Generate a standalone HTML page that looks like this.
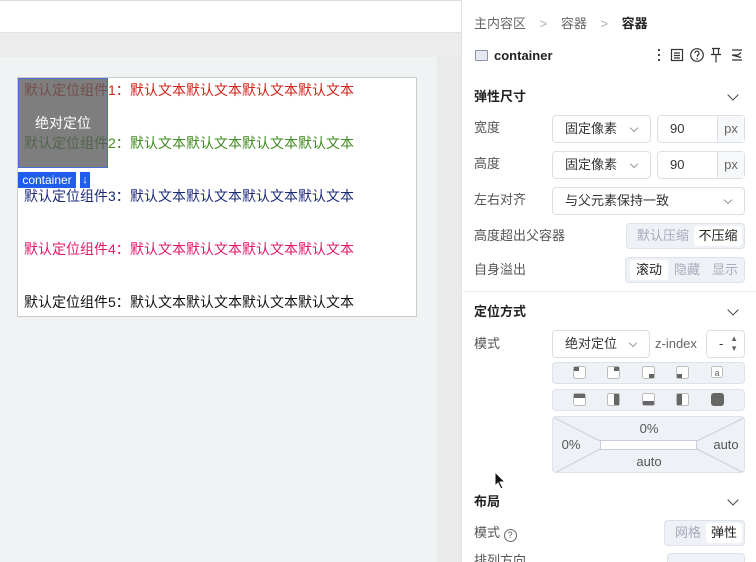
<!DOCTYPE html>
<html><head><meta charset="utf-8"><style>
*{box-sizing:border-box;margin:0;padding:0}
html,body{width:756px;height:562px;overflow:hidden}
body{position:relative;background:#fff;font-family:"Liberation Sans","Noto Sans CJK SC",sans-serif;font-size:13px;color:#333}
.abs{position:absolute}
.lbl{position:absolute;left:474px;font-size:13px;color:#555;line-height:16px}
.sel{position:absolute;border:1px solid #dcdfe6;border-radius:4px;background:#fff;font-size:13px;color:#333;padding-left:12px;line-height:26px;height:28px}
.sel .ch{position:absolute;right:13px;top:9px;width:6px;height:6px;border-right:1px solid #999;border-bottom:1px solid #999;transform:rotate(45deg)}
.seg{position:absolute;background:#eef1f6;border:1px solid #dde2ea;border-radius:4px;height:26px;font-size:13px}
.seg span{position:absolute;top:2px;height:20px;line-height:20px;text-align:center;color:#aab}
.seg span.on{background:#fff;color:#222;border-radius:3px}
.h{position:absolute;left:474px;font-size:13px;font-weight:bold;color:#222;line-height:16px}
.arr{position:absolute;left:729px;width:8px;height:8px;border-right:1.2px solid #444;border-bottom:1.2px solid #444;transform:rotate(45deg)}
.t{position:absolute;left:24px;font-size:14px;white-space:nowrap;line-height:16px}
.t b{font-weight:normal;position:absolute;left:106px}
</style></head><body>
<div class="abs" style="left:0;top:0;width:461px;height:32px;background:#fff;border-top:1px solid #ddd"></div>
<div class="abs" style="left:0;top:32px;width:461px;height:25px;background:#ececec;border-top:1px solid #e2e2e2"></div>
<div class="abs" style="left:0;top:57px;width:437px;height:505px;background:#f0f3f4"></div>
<div class="abs" style="left:437px;top:57px;width:24px;height:505px;background:#eaeaea"></div>
<div class="abs" style="left:17px;top:77px;width:400px;height:240px;background:#fff;border:1px solid #ccc"></div>
<div class="t" style="top:82px;color:#d0241b">默认定位组件1：<b>默认文本默认文本默认文本默认文本</b></div>
<div class="t" style="top:135px;color:#3f8a1f">默认定位组件2：<b>默认文本默认文本默认文本默认文本</b></div>
<div class="t" style="top:188px;color:#1c2a7a">默认定位组件3：<b>默认文本默认文本默认文本默认文本</b></div>
<div class="t" style="top:241px;color:#e0186a">默认定位组件4：<b>默认文本默认文本默认文本默认文本</b></div>
<div class="t" style="top:294px;color:#111">默认定位组件5：<b>默认文本默认文本默认文本默认文本</b></div>
<div class="abs" style="left:18px;top:78px;width:90px;height:90px;background:rgba(90,90,90,.78);border:1px solid #4a6fd0;color:#fff;font-size:14px;text-align:center;line-height:88px">绝对定位</div>
<div class="abs" style="left:18px;top:172px;width:58px;height:16px;background:#1f5eea;color:#fff;font-size:12px;line-height:16px;text-align:center">container</div>
<div class="abs" style="left:80px;top:172px;width:10px;height:16px;background:#1f5eea;color:#fff;font-size:11px;line-height:16px;text-align:center">↓</div>
<!-- panel -->
<div class="abs" style="left:461px;top:0;width:295px;height:562px;background:#fff;border-left:1px solid #e0e0e0"></div>
<div class="abs" style="left:474px;top:13px;font-size:13px;color:#666;white-space:nowrap">主内容区 <span style="color:#aaa;margin:0 10px">&gt;</span> 容器 <span style="color:#aaa;margin:0 10px">&gt;</span> <span style="color:#222;font-weight:bold">容器</span></div>
<div class="abs" style="left:475px;top:50px;width:13px;height:11px;border:1px solid #8a94a6;background:#e6eaf0;border-radius:1px"></div>
<div class="abs" style="left:494px;top:48px;font-size:13px;font-weight:bold;color:#222">container</div>
<svg class="abs" style="left:652px;top:46px" width="96" height="18">
<g fill="#333"><circle cx="7" cy="4" r="1.1"/><circle cx="7" cy="9" r="1.1"/><circle cx="7" cy="14" r="1.1"/></g>
<g stroke="#333" fill="none" stroke-width="1.2"><rect x="19.5" y="3.5" width="11" height="11"/><path d="M22 7h6M22 9.5h6M22 12h6"/>
<circle cx="45" cy="9" r="6.3"/><path d="M43 7.2a2 2 0 1 1 2.5 1.9v1.6"/>
<path d="M60 2.5h8M61.5 2.5v6M66.5 2.5v6M59 8.5h10M64 8.5v8"/>
<path d="M80 4h10M80 9h6l3-2.5M80 9l9 2.5M80 14h10"/></g>
<circle cx="45" cy="12.8" r=".8" fill="#333"/></svg>
<div class="h" style="top:89px">弹性尺寸</div><div class="arr" style="top:91px"></div>
<div class="lbl" style="top:120px">宽度</div>
<div class="sel" style="left:552px;top:115px;width:99px">固定像素<span class="ch"></span></div>
<div class="sel" style="left:657px;top:115px;width:88px">90<span style="position:absolute;right:0;top:0;width:27px;height:26px;border-left:1px solid #dcdfe6;background:#f7f8fa;color:#666;text-align:center">px</span></div>
<div class="lbl" style="top:156px">高度</div>
<div class="sel" style="left:552px;top:151px;width:99px">固定像素<span class="ch"></span></div>
<div class="sel" style="left:657px;top:151px;width:88px">90<span style="position:absolute;right:0;top:0;width:27px;height:26px;border-left:1px solid #dcdfe6;background:#f7f8fa;color:#666;text-align:center">px</span></div>
<div class="lbl" style="top:192px">左右对齐</div>
<div class="sel" style="left:552px;top:187px;width:193px">与父元素保持一致<span class="ch"></span></div>
<div class="lbl" style="top:228px">高度超出父容器</div>
<div class="seg" style="left:626px;top:223px;width:119px"><span style="left:4px;width:64px">默认压缩</span><span class="on" style="left:67px;width:48px">不压缩</span></div>
<div class="lbl" style="top:262px">自身溢出</div>
<div class="seg" style="left:625px;top:257px;width:120px"><span class="on" style="left:4px;width:38px">滚动</span><span style="left:42px;width:38px">隐藏</span><span style="left:80px;width:38px">显示</span></div>
<div class="abs" style="left:461px;top:291px;width:295px;height:1px;background:#eee"></div>
<div class="h" style="top:304px">定位方式</div><div class="arr" style="top:306px"></div>
<div class="lbl" style="top:336px">模式</div>
<div class="sel" style="left:552px;top:330px;width:98px">绝对定位<span class="ch"></span></div>
<div class="abs" style="left:655px;top:336px;color:#666;font-size:13px;line-height:16px">z-index</div>
<div class="sel" style="left:706px;top:330px;width:39px">-<span style="position:absolute;right:6px;top:0;color:#666;font-size:8px;line-height:10px;padding-top:3px">▲<br>▼</span></div>
<div class="seg" style="left:552px;top:362px;width:193px;height:22px"></div>
<div class="seg" style="left:552px;top:389px;width:193px;height:22px"></div>
<svg class="abs" style="left:552px;top:362px" width="193" height="50">
<g fill="#fff" stroke="#bbb"><rect x="21.5" y="4.5" width="12" height="12" rx="2"/><rect x="55.5" y="4.5" width="12" height="12" rx="2"/><rect x="90.5" y="4.5" width="12" height="12" rx="2"/><rect x="124.5" y="4.5" width="12" height="12" rx="2"/><rect x="159.5" y="4.5" width="11" height="11" rx="2"/>
<rect x="21.5" y="31.5" width="12" height="12" rx="2"/><rect x="55.5" y="31.5" width="12" height="12" rx="2"/><rect x="90.5" y="31.5" width="12" height="12" rx="2"/><rect x="124.5" y="31.5" width="12" height="12" rx="2"/></g>
<g fill="#666"><rect x="22" y="5" width="5" height="4"/><rect x="62" y="5" width="5" height="4"/><rect x="97" y="12" width="5" height="4"/><rect x="125" y="12" width="5" height="4"/><rect x="22" y="32" width="11" height="4"/><rect x="62" y="32" width="5" height="11"/><rect x="91" y="39" width="11" height="4"/><rect x="125" y="32" width="5" height="11"/><rect x="159" y="31" width="13" height="13" rx="3"/></g>
<text x="165" y="14" font-size="9" fill="#666" text-anchor="middle" font-family="Liberation Sans">a</text></svg>
<div class="seg" style="left:552px;top:416px;width:193px;height:57px;overflow:hidden">
<svg class="abs" style="left:0;top:0" width="193" height="57"><path d="M0 0L47 24M193 0L144 24M0 57L47 32M193 57L144 32" stroke="#ccd" fill="none"/><rect x="47.5" y="23.5" width="96" height="9" fill="#fff" stroke="#ccd"/></svg>
<span style="left:86px;top:2px;color:#555;width:20px">0%</span>
<span style="left:8px;top:18px;color:#555;width:20px">0%</span>
<span style="left:160px;top:18px;color:#555;width:26px">auto</span>
<span style="left:82px;top:35px;color:#555;width:28px">auto</span></div>
<svg class="abs" style="left:494px;top:471px" width="12" height="18"><path d="M1 1v14l3-3 3 6 2-1-3-6h5z" fill="#111" stroke="#fff"/></svg>
<div class="h" style="top:494px">布局</div><div class="arr" style="top:496px"></div>
<div class="lbl" style="top:525px">模式 <span style="display:inline-block;width:13px;height:13px;border:1px solid #666;border-radius:50%;font-size:9px;text-align:center;line-height:11px;vertical-align:-1px">?</span></div>
<div class="seg" style="left:664px;top:520px;width:81px"><span style="left:4px;width:38px">网格</span><span class="on" style="left:41px;width:36px">弹性</span></div>
<div class="lbl" style="top:553px">排列方向</div>
<div class="seg" style="left:667px;top:553px;width:78px"></div>
</body></html>
